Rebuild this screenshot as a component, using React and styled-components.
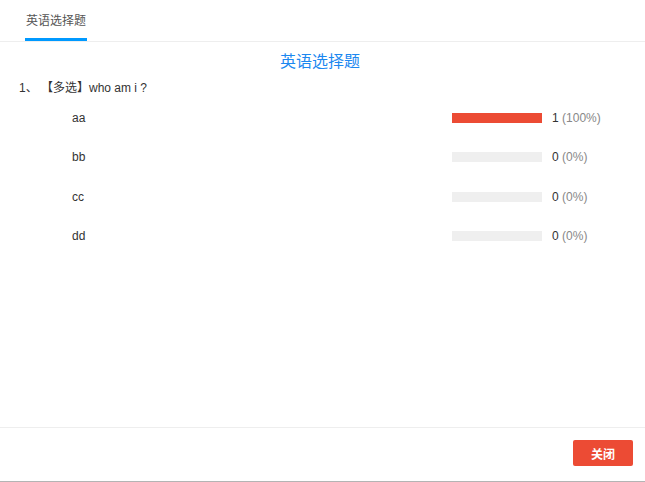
import React from 'react';
import styled, {createGlobalStyle} from 'styled-components';

const GlobalStyle = createGlobalStyle`
    html, body {
        margin: 0;
        padding: 0;
        background: #fff;
    }
    body {
        font-family: "Liberation Sans", "Noto Sans CJK SC", sans-serif;
        color: #333;
    }
`;

const Dialog = styled.div`
    width: 645px;
    height: 482px;
    box-sizing: border-box;
    border-bottom: 1px solid #b4b4b4;
    display: flex;
    flex-direction: column;
`;

const Tabs = styled.div`
    height: 42px;
    box-sizing: border-box;
    border-bottom: 1px solid #eeeeee;
    display: flex;
    padding-left: 25px;
`;

const Tab = styled.div`
    height: 41px;
    box-sizing: border-box;
    padding: 0 1px;
    display: flex;
    align-items: center;
    font-size: 12px;
    color: #555;
    border-bottom: 3px solid ${props => (props.active ? '#0099ff' : 'transparent')};
`;

const Body = styled.div`
    flex: 1;
    padding: 9px 19px 0;
`;

const Title = styled.h2`
    margin: 0;
    padding-right: 5px;
    text-align: center;
    font-size: 16px;
    line-height: 22px;
    font-weight: normal;
    color: #1c88f0;
`;

const Question = styled.div`
    margin-top: 6px;
    font-size: 12px;
    line-height: 18px;
    color: #333;
`;

const Options = styled.div`
    margin-top: 1px;
    padding-left: 53px;
`;

const OptionRow = styled.div`
    height: 39.5px;
    display: flex;
    align-items: center;
    font-size: 12px;
`;

const Label = styled.div`
    width: 380px;
    color: #333;
`;

const Bar = styled.div`
    width: 90px;
    height: 10px;
    background: #efefef;
`;

const Fill = styled.div`
    height: 100%;
    background: #ec4b34;
`;

const Count = styled.div`
    margin-left: 10px;
    color: #333;
`;

const Percent = styled.span`
    color: #888;
`;

const Footer = styled.div`
    height: 54px;
    box-sizing: border-box;
    border-top: 1px solid #eeeeee;
    display: flex;
    justify-content: flex-end;
    align-items: flex-start;
    padding: 12px 12px 0 0;
`;

const CloseButton = styled.button`
    width: 60px;
    height: 26px;
    border: 0;
    border-radius: 2px;
    background: #ec4b34;
    color: #fff;
    font-family: inherit;
    font-size: 12px;
    font-weight: bold;
    cursor: pointer;
`;

const options = [
    {label: 'aa', count: 1},
    {label: 'bb', count: 0},
    {label: 'cc', count: 0},
    {label: 'dd', count: 0}
];

const total = 1;

export default function App() {
    return (
        <Dialog>
            <GlobalStyle/>
            <Tabs>
                <Tab active>英语选择题</Tab>
            </Tabs>
            <Body>
                <Title>英语选择题</Title>
                <Question>1、&nbsp;【多选】who am i ?</Question>
                <Options>
                    {options.map(o => {
                        const pct = total ? Math.round(o.count / total * 100) : 0;
                        return (
                            <OptionRow key={o.label}>
                                <Label>{o.label}</Label>
                                <Bar>
                                    <Fill style={{width: pct + '%'}}/>
                                </Bar>
                                <Count>{o.count} <Percent>({pct}%)</Percent></Count>
                            </OptionRow>
                        );
                    })}
                </Options>
            </Body>
            <Footer>
                <CloseButton>关闭</CloseButton>
            </Footer>
        </Dialog>
    );
}
